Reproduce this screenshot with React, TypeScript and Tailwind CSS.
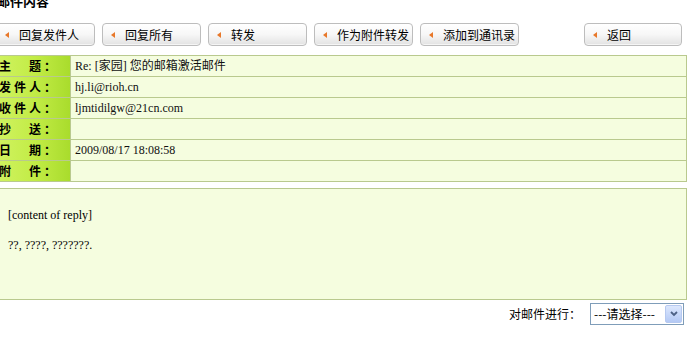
const cjk = { fontFamily: '"Noto Sans CJK SC", sans-serif' };
const serif = { fontFamily: '"Liberation Serif", "Noto Sans CJK SC", serif' };

const actions = ["回复发件人", "回复所有", "转发", "作为附件转发", "添加到通讯录"];

const rows = [
  { label: "主　题：", value: "Re: [家园] 您的邮箱激活邮件" },
  { label: "发件人：", value: "hj.li@rioh.cn" },
  { label: "收件人：", value: "ljmtidilgw@21cn.com" },
  { label: "抄　送：", value: "" },
  { label: "日　期：", value: "2009/08/17 18:08:58" },
  { label: "附　件：", value: "" },
];

function Arrow() {
  return (
    <svg width="4" height="6" viewBox="0 0 4 6" className="shrink-0">
      <path d="M4 0 L0 3 L4 6 Z" fill="#e8782a" />
    </svg>
  );
}

function ToolButton({ text, w = "w-[99px]" }: { text: string; w?: string }) {
  return (
    <div
      className={`${w} h-[23px] flex items-center shrink-0 rounded-[4px] border border-[#bdbdbd] bg-gradient-to-b from-white via-[#f7f7f7] to-[#e2e2e2] shadow-[inset_0_-1px_0_#f5f5f5]`}
    >
      <div className="w-[8px]" />
      <Arrow />
      <span className="ml-[10px] text-[12px] leading-none text-black" style={cjk}>
        {text}
      </span>
    </div>
  );
}

export default function App() {
  return (
    <div className="w-[690px] h-[345px] overflow-hidden bg-white">
      <div className="h-[8px] overflow-hidden">
        <div className="-mt-[6px] -ml-[3px] text-[13px] font-bold leading-[14px]" style={cjk}>
          邮件内容
        </div>
      </div>

      <div className="mt-[15px] flex -ml-[4px] gap-[7px] pr-[8px]">
        {actions.map((a) => (
          <ToolButton key={a} text={a} />
        ))}
        <div className="ml-auto">
          <ToolButton text="返回" w="w-[98px]" />
        </div>
      </div>

      <div className="mt-[9px] w-[687px] border-t border-r border-[#b9c98e]">
        {rows.map((r) => (
          <div key={r.label} className="flex h-[21px] border-b border-[#b9c98e]">
            <div className="w-[71px] shrink-0 flex items-center border-r border-[#b9c98e] bg-gradient-to-r from-[#cff25e] via-[#c2ec45] to-[#a9dc2c] overflow-hidden">
              <span className="-ml-[1px] text-[12px] font-bold tracking-[3px] leading-none whitespace-nowrap" style={cjk}>
                {r.label}
              </span>
            </div>
            <div className="flex-1 flex items-center bg-[#f5fddf] pl-[4px]">
              <span className="text-[12px] leading-none whitespace-nowrap text-[#111]" style={serif}>
                {r.value}
              </span>
            </div>
          </div>
        ))}
      </div>

      <div className="mt-[6px] w-[687px] h-[112px] border-t border-b border-r border-[#b9c98e] bg-[#f5fddf] pl-[8px] pt-[19px]">
        <div className="text-[12px] leading-[14px]" style={serif}>
          [content of reply]
        </div>
        <div className="mt-[16px] text-[12px] leading-[14px]" style={serif}>
          ??, ????, ???????.
        </div>
      </div>

      <div className="mt-[3px] flex items-center justify-end pr-[6px]">
        <span className="text-[12px] mr-[9px]" style={cjk}>
          对邮件进行：
        </span>
        <div className="w-[94px] h-[22px] border border-[#7f9db9] bg-white flex items-center">
          <span className="pl-[3px] flex-1 text-[12px] leading-none whitespace-nowrap" style={cjk}>
            ---请选择---
          </span>
          <div className="w-[17px] h-[18px] mr-[1px] rounded-[2px] border border-[#b6c9f0] bg-gradient-to-b from-[#dce7fd] to-[#b4c9f5] flex items-center justify-center">
            <svg width="8" height="6" viewBox="0 0 8 6">
              <path d="M1 1 L4 4 L7 1" stroke="#4d6185" strokeWidth="1.8" fill="none" />
            </svg>
          </div>
        </div>
      </div>
    </div>
  );
}
